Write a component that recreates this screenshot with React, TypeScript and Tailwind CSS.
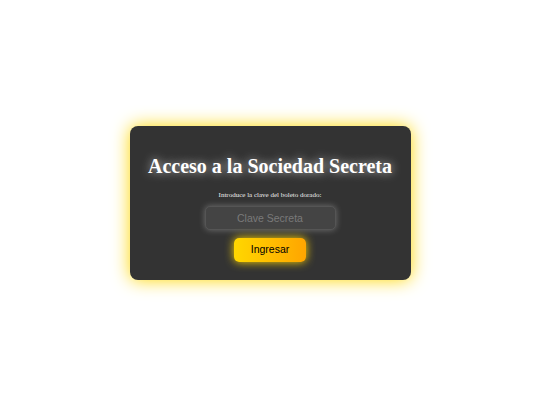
import React from "react";

export default function App() {
  return (
    <div className="w-[540px] h-[405px] bg-white flex items-center justify-center">
      <div className="w-[281px] h-[154px] rounded-[8px] bg-[#333333] shadow-[0_0_18px_#ffd700] flex flex-col items-center pt-[29px] font-['Liberation_Serif','Times_New_Roman',serif]">
        <h1 className="text-[20px] leading-[23px] font-bold text-white [text-shadow:0_0_10px_rgba(255,255,255,0.7)]">
          Acceso a la Sociedad Secreta
        </h1>
        <p className="mt-[13px] text-[7px] leading-[8px] text-[#eeeeee]">
          Introduce la clave del boleto dorado:
        </p>
        <input
          type="password"
          placeholder="Clave Secreta"
          className="mt-[7px] w-[131px] h-[24px] rounded-[5px] bg-[#444444] border border-[#555555] text-center text-[10.5px] text-white placeholder:text-[#7a7a7a] outline-none shadow-[0_0_6px_rgba(255,255,255,0.3)] font-['Liberation_Sans',Arial,sans-serif]"
        />
        <button className="mt-[8px] w-[72px] h-[24px] rounded-[5px] bg-gradient-to-r from-[#ffd700] to-[#ffa500] text-black text-[10.5px] shadow-[0_0_10px_#ffd700] font-['Liberation_Sans',Arial,sans-serif]">
          Ingresar
        </button>
      </div>
    </div>
  );
}
